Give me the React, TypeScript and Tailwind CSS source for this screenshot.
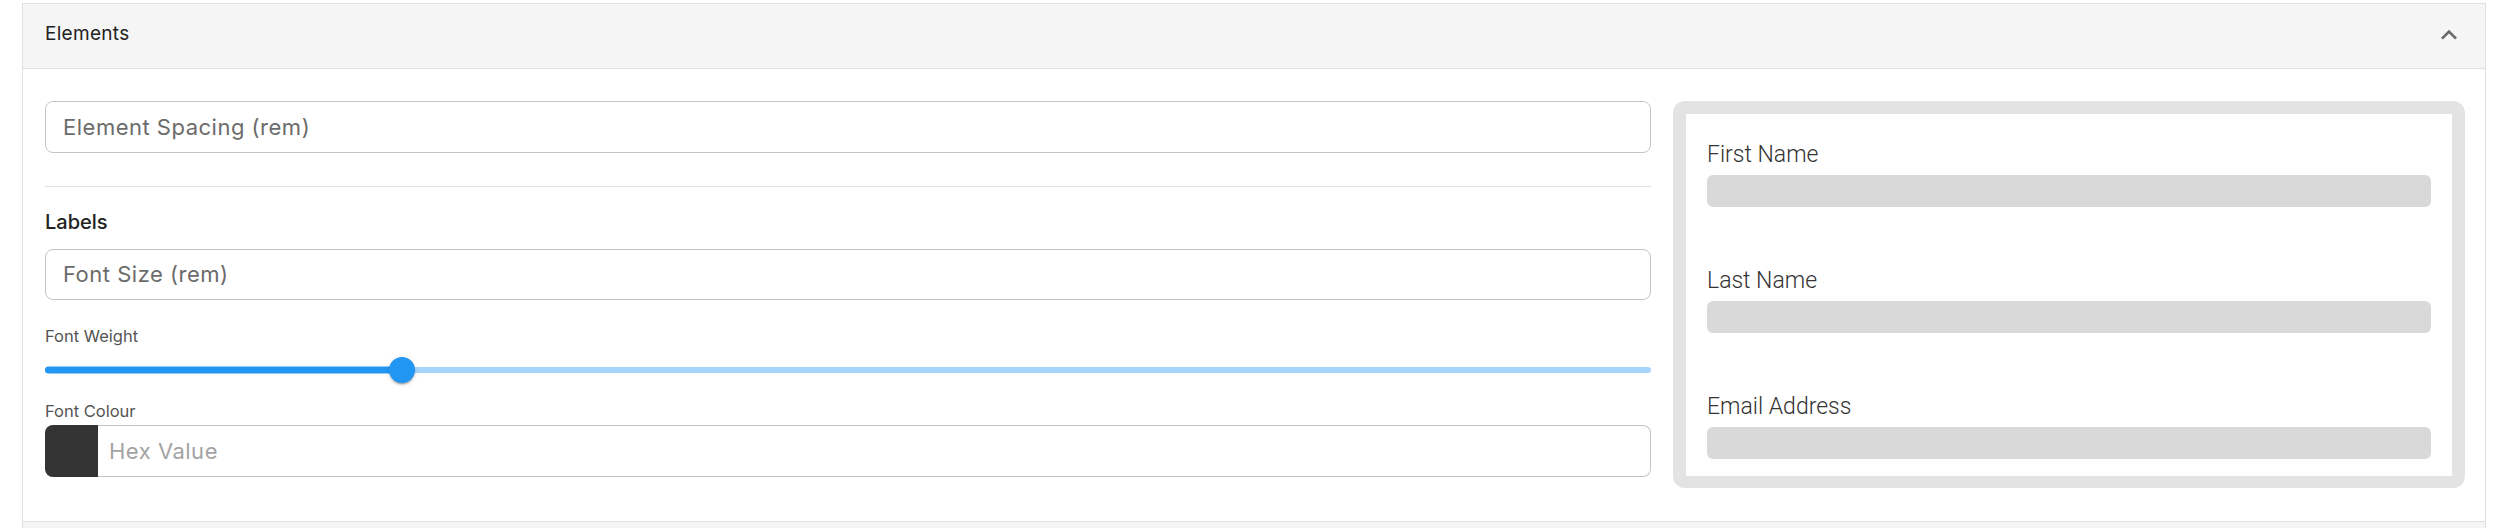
import { useState } from 'react'

const previewFields = ['First Name', 'Last Name', 'Email Address']

function OutlinedInput({ label, height = 'h-[52px]' }: { label: string; height?: string }) {
  return (
    <div
      className={`flex ${height} items-center rounded-[8px] border border-[#c4c4c4] pl-[17px] text-[22px] tracking-[0.5px] text-[#6b6b6b]`}
    >
      {label}
    </div>
  )
}

function ChevronUp() {
  return (
    <svg width="32" height="32" viewBox="0 0 24 24" className="fill-[#6b6b6b]">
      <path d="M12 8l-6 6 1.41 1.41L12 10.83l4.59 4.58L18 14z" />
    </svg>
  )
}

function FontWeightSlider() {
  const [value] = useState(200)
  const pct = (value / 900) * 100

  return (
    <div className="relative mt-[11px] flex h-[26px] items-center">
      <div className="h-[6px] w-full rounded-full bg-[#a6d4fa]" />
      <div
        className="absolute left-0 top-1/2 h-[7px] -translate-y-1/2 rounded-full bg-[#2196f3]"
        style={{ width: `${pct}%` }}
      />
      <div
        className="absolute top-0 h-[26px] w-[26px] -translate-x-1/2 rounded-full bg-[#2196f3] shadow-[0_3px_1px_-2px_rgba(0,0,0,0.2),0_2px_2px_0_rgba(0,0,0,0.14),0_1px_5px_0_rgba(0,0,0,0.12)]"
        style={{ left: `${pct}%` }}
      />
    </div>
  )
}

export default function App() {
  return (
    <div className="min-h-screen bg-white pt-[3px] font-['Inter',sans-serif]">
      <div className="ml-[22px] mr-[16px] border border-[#e0e0e0]">
        {/* Accordion header */}
        <div className="flex h-[65px] items-center justify-between border-b border-[#e0e0e0] bg-[#f5f5f5] pb-[3px] pl-[22px] pr-[20px]">
          <span className="text-[19px] tracking-[0.3px] text-[#222]">Elements</span>
          <ChevronUp />
        </div>

        {/* Body */}
        <div className="grid grid-cols-[1fr_792px] items-start gap-[22px] pb-[33px] pl-[22px] pr-[20px] pt-[32px]">
          <div className="flex flex-col">
            <OutlinedInput label="Element Spacing (rem)" />

            <div className="mt-[33px] h-px bg-[#e0e0e0]" />

            <div className="mt-[21px] text-[20px] font-medium leading-[28px] text-[#222]">Labels</div>

            <div className="mt-[13px]">
              <OutlinedInput label="Font Size (rem)" height="h-[51px]" />
            </div>

            <div className="mt-[26px] text-[16.5px] leading-[20px] text-[#555]">Font Weight</div>

            <FontWeightSlider />

            <div className="mt-[18px] text-[16.5px] leading-[20px] text-[#555]">Font Colour</div>

            <div className="mt-[4px] flex h-[52px]">
              <div className="w-[53px] rounded-l-[8px] bg-[#333]" />
              <div className="flex flex-1 items-center rounded-r-[8px] border border-l-0 border-[#c4c4c4] pl-[11px] text-[22px] tracking-[0.5px] text-[#a3a3a3]">
                Hex Value
              </div>
            </div>
          </div>

          {/* Form preview */}
          <div className="rounded-[12px] border-[13px] border-b-[12px] border-[#e3e3e3]">
            <div className="bg-white px-[21px] pb-[17px] pt-[27px] font-['Roboto',sans-serif]">
              {previewFields.map((field, i) => (
                <div key={field} className={i > 0 ? 'mt-[60px]' : ''}>
                  <div className="text-[23px] font-light leading-[27px] text-[#333]">{field}</div>
                  <div className="mt-[7px] h-[32px] rounded-[6px] bg-[#d9d9d9]" />
                </div>
              ))}
            </div>
          </div>
        </div>
      </div>

      {/* Next accordion item, cut off */}
      <div className="ml-[22px] mr-[16px] h-[10px] border-x border-[#e0e0e0] bg-[#f5f5f5]" />
    </div>
  )
}
